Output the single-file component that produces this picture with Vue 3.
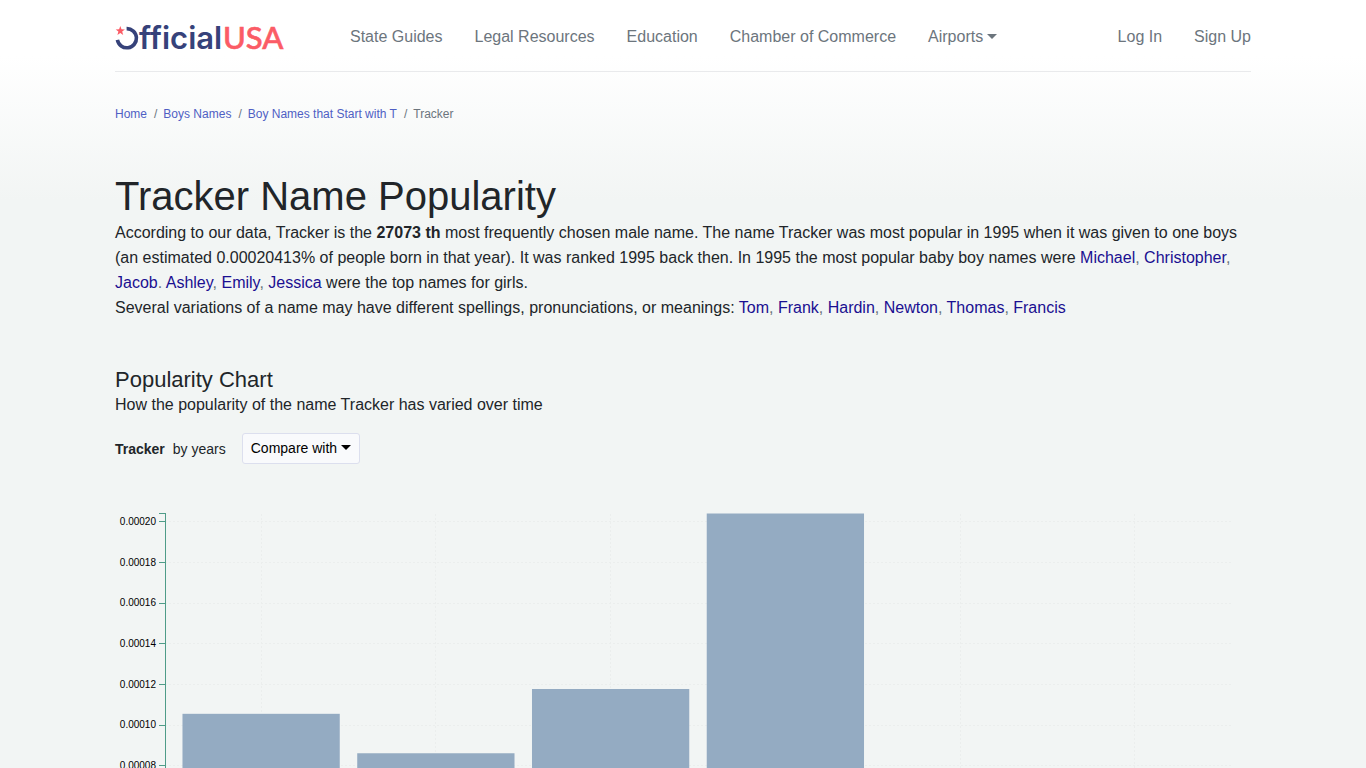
<template>
  <div class="page">
    <div class="container">
      <header class="header">
        <a href="#" class="logo" aria-label="OfficialUSA">
          <svg width="170" height="36" viewBox="0 0 170 36">
            <path d="M11.6 9.6 A9.6 9.6 0 1 1 2.4 20.9" fill="none" stroke="#36427a" stroke-width="3.6" />
            <path d="M5.3 7 L6.5 10.3 L9.9 10.4 L7.2 12.5 L8.2 15.9 L5.3 13.9 L2.4 15.9 L3.4 12.5 L0.7 10.4 L4.1 10.3 Z" fill="#fb5c66" />
            <text x="24" y="30" class="logo-official">fficial</text>
            <text x="108" y="30" class="logo-usa">USA</text>
          </svg>
        </a>
        <nav class="nav">
          <a v-for="item in navItems" :key="item" href="#" class="nav-link">{{ item }}</a>
          <button type="button" class="nav-link caret">Airports</button>
        </nav>
        <nav class="nav">
          <a href="#" class="nav-link">Log In</a>
          <a href="#" class="nav-link">Sign Up</a>
        </nav>
      </header>

      <ol class="breadcrumb">
        <li v-for="item in breadcrumbs" :key="item"><a href="#">{{ item }}</a></li>
        <li>Tracker</li>
      </ol>

      <main>
        <h1>Tracker Name Popularity</h1>
        <p>
          According to our data, Tracker is the <b>27073 th</b> most frequently chosen male name.
          The name Tracker was most popular in 1995 when it was given to one boys (an estimated
          0.00020413% of people born in that year). It was ranked 1995 back then. In 1995 the most
          popular baby boy names were
          <span class="names"><a href="#">Michael</a>, <a href="#">Christopher</a>,
          <a href="#">Jacob</a>. <a href="#">Ashley</a>, <a href="#">Emily</a>,
          <a href="#">Jessica</a></span> were the top names for girls.
        </p>
        <p>
          Several variations of a name may have different spellings, pronunciations, or meanings:
          <span class="names"><template v-for="(name, i) in variations" :key="name"><template v-if="i">, </template><a href="#">{{ name }}</a></template></span>
        </p>

        <section class="popularity">
          <h2>Popularity Chart</h2>
          <p>How the popularity of the name Tracker has varied over time</p>

          <div class="controls">
            <span class="series"><b>Tracker</b><span>by years</span></span>
            <button type="button" class="compare-btn caret">Compare with</button>
          </div>

          <svg class="chart" viewBox="0 0 1136 450" role="img" aria-label="Popularity of Tracker by years">
            <g class="grid">
              <line v-for="t in ticks" :key="t" :x1="plot.left" :x2="plot.right" :y1="yPos(t)" :y2="yPos(t)" />
              <line v-for="n in bands" :key="'v' + n" :x1="bandX(n - 1) + bandWidth / 2" :x2="bandX(n - 1) + bandWidth / 2" :y1="plot.top" :y2="plot.bottom" />
            </g>
            <rect
              v-for="(v, i) in values"
              :key="i"
              class="bar"
              :x="bandX(i)"
              :y="yPos(v)"
              :width="bandWidth"
              :height="plot.bottom - yPos(v)"
            />
            <path class="axis" :d="axisPath" />
            <g v-for="t in ticks" :key="'t' + t">
              <line class="axis" :x1="plot.left - 6" :x2="plot.left" :y1="yPos(t)" :y2="yPos(t)" />
              <text class="tick-label" :x="plot.left - 9" :y="yPos(t)" dy="3">{{ t.toFixed(5) }}</text>
            </g>
          </svg>
        </section>
      </main>
    </div>
  </div>
</template>

<script setup>
const navItems = ['State Guides', 'Legal Resources', 'Education', 'Chamber of Commerce']
const breadcrumbs = ['Home', 'Boys Names', 'Boy Names that Start with T']
const variations = ['Tom', 'Frank', 'Hardin', 'Newton', 'Thomas', 'Francis']

const values = [0.0001056, 0.0000862, 0.0001178, 0.00020413]
const bands = 6
const ticks = Array.from({ length: 11 }, (_, i) => i * 0.00002)

const plot = { left: 50, right: 1116, top: 13.5, bottom: 428.5 }
const maxValue = 0.00020413

// band scale with 10% padding
const step = (plot.right - plot.left) / (bands + 0.1)
const bandWidth = step * 0.9

function bandX(i) {
  return plot.left + step * (i + 0.1)
}

function yPos(v) {
  return plot.bottom - (v / maxValue) * (plot.bottom - plot.top)
}

const axisPath = `M${plot.left - 6},${plot.top}H${plot.left}V${plot.bottom}H${plot.right}`
</script>

<style>
body {
  margin: 0;
}
</style>

<style scoped>
.page {
  font-family: Arial, "Liberation Sans", sans-serif;
  font-size: 16px;
  line-height: 25px;
  color: #212529;
  background: #f2f5f4 linear-gradient(#fff 56px, #f2f5f4 200px) no-repeat;
}

.container {
  max-width: 1136px;
  margin: 0 auto;
}

.header {
  display: flex;
  align-items: center;
  box-sizing: border-box;
  height: 72px;
  padding-top: 2px;
  border-bottom: 1px solid #e9eaec;
}

.logo {
  display: flex;
  margin-right: 65px;
}

.logo-official {
  font: 600 31px Inter, sans-serif;
  fill: #36427a;
}

.logo-usa {
  font: 500 31px Lato, sans-serif;
  fill: #fb5c66;
  stroke: #fb5c66;
  stroke-width: 0.6;
}

.nav {
  display: flex;
  gap: 32px;
}

.nav:last-child {
  margin-left: auto;
}

.nav-link {
  padding: 0;
  border: none;
  background: none;
  font: inherit;
  color: #6c757d;
  text-decoration: none;
  cursor: pointer;
}

.caret::after {
  content: "";
  display: inline-block;
  margin-left: 4px;
  vertical-align: 3px;
  border-top: 5px solid;
  border-left: 5px solid transparent;
  border-right: 5px solid transparent;
}

.breadcrumb {
  display: flex;
  margin: 33px 0 49px;
  padding: 0;
  list-style: none;
  font-size: 12px;
  line-height: 18px;
  color: #6c757d;
}

.breadcrumb a {
  color: #4f5fc4;
  text-decoration: none;
}

.breadcrumb li + li::before {
  content: "/";
  padding: 0 6px 0 7px;
}

h1 {
  margin: 0;
  font-size: 40px;
  font-weight: 400;
  line-height: 48px;
}

p {
  margin: 0;
}

.names {
  color: #6c757d;
}

.names a {
  color: #1a0f91;
  text-decoration: none;
}

.popularity {
  margin-top: 48px;
}

h2 {
  margin: 0;
  font-size: 22px;
  font-weight: 400;
  line-height: 24px;
}

.controls {
  display: flex;
  align-items: center;
  gap: 16px;
  margin-top: 16px;
  font-size: 14px;
}

.series {
  display: flex;
  gap: 8px;
  padding-top: 2px;
}

.compare-btn {
  padding: 4px 8px;
  border: 1px solid #dcdfee;
  border-radius: 3px;
  background: #f9fafc;
  font: inherit;
  line-height: 21px;
  color: #000;
  cursor: pointer;
}

.chart {
  display: block;
  width: 100%;
  margin-top: 36px;
}

.grid line {
  stroke: #ebeeed;
  stroke-dasharray: 2 2;
  shape-rendering: crispEdges;
}

.bar {
  fill: #94abc2;
}

.axis {
  fill: none;
  stroke: #4f9c88;
  shape-rendering: crispEdges;
}

.tick-label {
  font-size: 10px;
  text-anchor: end;
  fill: #000;
}
</style>
